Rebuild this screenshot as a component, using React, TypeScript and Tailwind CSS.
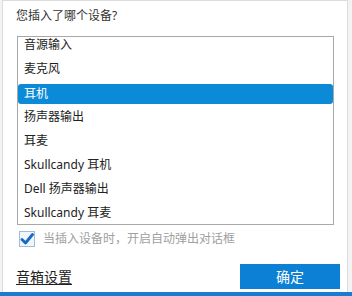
const font = "font-['Noto_Sans','Noto_Sans_CJK_SC',sans-serif]";

const devices = [
  "音源输入",
  "麦克风",
  "耳机",
  "扬声器输出",
  "耳麦",
  "Skullcandy 耳机",
  "Dell 扬声器输出",
  "Skullcandy 耳麦",
];

function DeviceList({ selected }: { selected: number }) {
  return (
    <div className="ml-[14px] mt-[12px] w-[317px] h-[189px] border border-[#a8a8a8] overflow-hidden bg-white">
      <div className="-mt-[4px] flex flex-col">
        {devices.map((d, i) => (
          <div key={d} className="h-[24px] flex items-center">
            <div
              className={
                i === selected
                  ? "w-full h-[20px] mt-[2px] rounded-[3px] bg-[#0b8ad8] text-white flex items-center pl-[6px] text-[12px]"
                  : "w-full pl-[6px] text-[12px] text-[#222]"
              }
            >
              {d}
            </div>
          </div>
        ))}
      </div>
    </div>
  );
}

function CheckBox() {
  return (
    <div className="w-[16px] h-[16px] border border-[#9fbcd8] bg-[#eef5fb] flex items-center justify-center">
      <svg width="14" height="14" viewBox="0 0 14 14">
        <path d="M2 7.5 L5.5 11 L12.5 2.5" fill="none" stroke="#1769c2" strokeWidth="2.8" strokeLinecap="round" strokeLinejoin="round" />
      </svg>
    </div>
  );
}

export default function App() {
  return (
    <div className={`w-[352px] h-[296px] bg-[#f3f3f3] flex flex-col ${font}`}>
      <div className="ml-[2px] w-[346px] h-[292px] bg-white border-x border-t border-[#dcdcdc] flex flex-col">
        <div className="pl-[13px] pt-[7px] text-[12px] leading-[16px] text-[#333]">您插入了哪个设备?</div>
        <DeviceList selected={2} />
        <div className="ml-[16px] mt-[5px] flex items-center gap-[8px]">
          <CheckBox />
          <span className="text-[12px] text-[#a0a0a0]">当插入设备时，开启自动弹出对话框</span>
        </div>
        <div className="mt-[16px] flex items-center justify-between pl-[13px] pr-[7px]">
          <span className="text-[14px] text-[#222] underline underline-offset-2">音箱设置</span>
          <button className="w-[100px] h-[25px] bg-[#0b80d4] text-white text-[14px] flex items-center justify-center">确定</button>
        </div>
      </div>
      <div className="h-[4px] bg-[#1a7bd0]" />
    </div>
  );
}
